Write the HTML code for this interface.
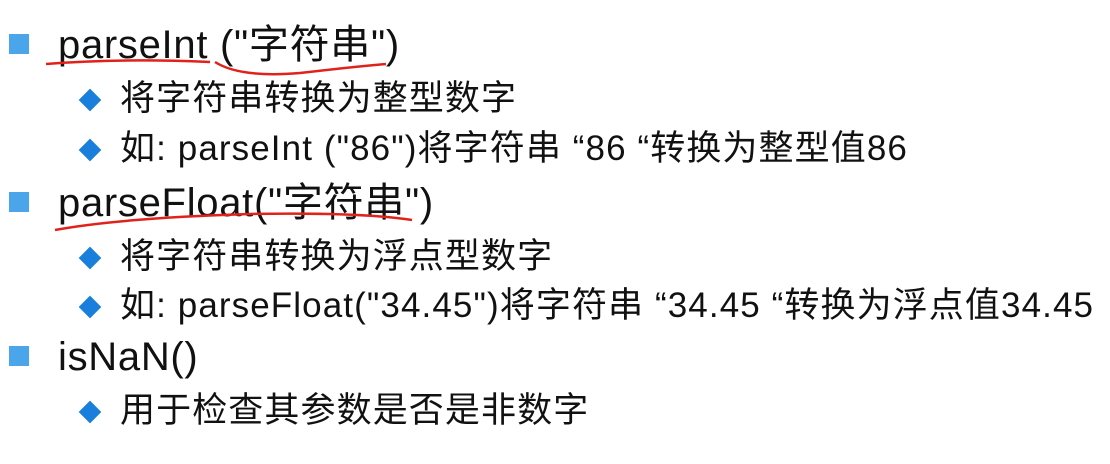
<!DOCTYPE html>
<html><head><meta charset="utf-8"><style>
body{margin:0;width:1110px;height:464px;background:#fff;position:relative;overflow:hidden;font-family:"Liberation Sans","Noto Sans CJK SC",sans-serif;color:#111}
.l{position:absolute;white-space:nowrap;line-height:1}
.a{font-size:40px;left:58px;letter-spacing:0.7px}
.b{font-size:35px;left:120px;letter-spacing:1.1px}
.sq{position:absolute;left:9px;width:20px;height:20px;background:#4aa5ea}
.dm{position:absolute;left:82px;width:16px;height:16px;background:#1a7fdc;transform:rotate(45deg)}
</style></head><body>
<div class="sq" style="top:34px"></div>
<div class="l a" style="top:25px">parseInt ("字符串")</div>
<div class="dm" style="top:92px"></div>
<div class="l b" style="top:81px">将字符串转换为整型数字</div>
<div class="dm" style="top:142px"></div>
<div class="l b" style="top:131px">如: parseInt ("86")将字符串 “86 “转换为整型值86</div>
<div class="sq" style="top:192px"></div>
<div class="l a" style="top:183px">parseFloat("字符串")</div>
<div class="dm" style="top:250px"></div>
<div class="l b" style="top:239px">将字符串转换为浮点型数字</div>
<div class="dm" style="top:299px"></div>
<div class="l b" style="top:288px">如: parseFloat("34.45")将字符串 “34.45 “转换为浮点值34.45</div>
<div class="sq" style="top:346px"></div>
<div class="l a" style="top:337px">isNaN()</div>
<div class="dm" style="top:404px"></div>
<div class="l b" style="top:393px">用于检查其参数是否是非数字</div>
<svg style="position:absolute;left:0;top:0" width="1110" height="464">
<path d="M46 64 Q120 58 210 62" stroke="#e0231a" stroke-width="2.5" fill="none"/>
<path d="M215 62 Q240 78 300 73 Q360 66 386 64" stroke="#e0231a" stroke-width="2.5" fill="none"/>
<path d="M55 230 Q120 218 250 214 Q360 212 412 220" stroke="#e0231a" stroke-width="2.5" fill="none"/>
</svg>
</body></html>
